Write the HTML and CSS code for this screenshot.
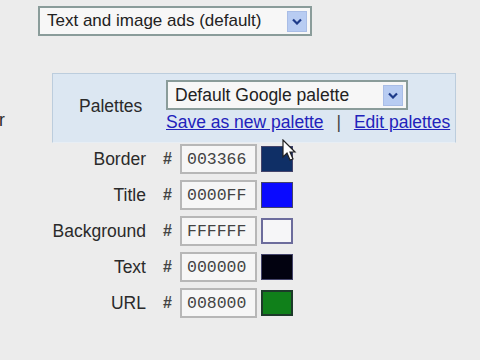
FILE: index.html
```html
<!DOCTYPE html>
<html lang="en">
<head>
  <meta charset="UTF-8" />
  <title>Ad colors</title>
  <link rel="stylesheet" href="styles.css">
</head>
<body>
  <div class="page">
    <div class="ad-type">
      <div class="select wide">
        <span class="select-text">Text and image ads (default)</span>
        <span class="drop-btn">
          <svg width="10" height="7" viewBox="0 0 10 7"><path d="M1 1.5 L5 5.5 L9 1.5" fill="none" stroke="#1d3a8a" stroke-width="2.2"/></svg>
        </span>
      </div>
    </div>

    <div class="side-label">Color</div>

    <div class="palette-box">
      <label class="palette-label">Palettes</label>
      <div class="palette-controls">
        <div class="select narrow">
          <span class="select-text">Default Google palette</span>
          <span class="drop-btn">
            <svg width="10" height="7" viewBox="0 0 10 7"><path d="M1 1.5 L5 5.5 L9 1.5" fill="none" stroke="#1d3a8a" stroke-width="2.2"/></svg>
          </span>
        </div>
        <div class="links">
          <a href="#">Save as new palette</a>
          <span class="sep">|</span>
          <a href="#">Edit palettes</a>
        </div>
      </div>
    </div>

    <div class="colors">
      <div class="color-row">
        <label>Border</label>
        <span class="hash">#</span>
        <input type="text" value="003366" />
        <span class="swatch" style="background:#0f2f66"></span>
      </div>
      <div class="color-row">
        <label>Title</label>
        <span class="hash">#</span>
        <input type="text" value="0000FF" />
        <span class="swatch" style="background:#0a0aff"></span>
      </div>
      <div class="color-row">
        <label>Background</label>
        <span class="hash">#</span>
        <input type="text" value="FFFFFF" />
        <span class="swatch light" style="background:#f6f6f8"></span>
      </div>
      <div class="color-row">
        <label>Text</label>
        <span class="hash">#</span>
        <input type="text" value="000000" />
        <span class="swatch" style="background:#020210"></span>
      </div>
      <div class="color-row">
        <label>URL</label>
        <span class="hash">#</span>
        <input type="text" value="008000" />
        <span class="swatch green" style="background:#10801a"></span>
      </div>
    </div>

    <svg class="cursor" width="16" height="24" viewBox="0 0 16 24">
      <path d="M1 1 L1 18 L5 14 L8 21 L11 20 L8 13 L13 13 Z" fill="#fff" stroke="#222" stroke-width="1.2"/>
    </svg>
  </div>
</body>
</html>
```

FILE: styles.css
```css
body {
  margin: 0;
  background: #ececec;
  font-family: 'Liberation Sans', Arial, sans-serif;
  font-size: 17.5px;
  color: #2a2a2a;
}

.page {
  position: relative;
  height: 360px;
  overflow: hidden;
}

.ad-type {
  padding: 6px 0 0 38px;
}

.select {
  display: flex;
  align-items: center;
  justify-content: space-between;
  box-sizing: border-box;
  background: #f7f7f7;
  border: 2px solid #8a9c9a;
  padding: 0 3px 0 7px;
}

.select.wide {
  width: 274px;
  height: 30px;
  font-size: 17px;
}

.select.narrow {
  width: 242px;
  height: 30px;
}

.select-text {
  color: #222;
}

.drop-btn {
  width: 18px;
  height: 19px;
  background: #b8ccf2;
  border: 1px solid #a9bde6;
  display: flex;
  align-items: center;
  justify-content: center;
}

.side-label {
  position: absolute;
  left: -37px;
  top: 110px;
}

.palette-box {
  margin: 37px 0 0 52px;
  width: 404px;
  height: 70px;
  box-sizing: border-box;
  background: #dce7f2;
  border: 1px solid #bccddd;
  border-bottom-color: #e8eef4;
  display: flex;
  align-items: flex-start;
  padding: 6px 0 0 26px;
}

.palette-label {
  margin-top: 16px;
  width: 87px;
}

.links {
  margin-top: 2px;
  white-space: nowrap;
}

.links a {
  color: #2222bb;
}

.sep {
  color: #444;
  margin: 0 8px;
}

.colors {
  display: flex;
  flex-direction: column;
  gap: 6px;
  margin-top: 1px;
}

.color-row {
  display: flex;
  align-items: center;
  height: 30px;
}

.color-row label {
  width: 146px;
  text-align: right;
}

.hash {
  width: 34px;
  box-sizing: border-box;
  padding-left: 17px;
  font-size: 16px;
  font-weight: bold;
  color: #444;
}

.color-row input {
  box-sizing: border-box;
  width: 77px;
  height: 30px;
  margin: 0;
  border: 2px solid #b7b7b7;
  background: #f6f6f6;
  font-family: 'Liberation Mono', 'Courier New', monospace;
  font-size: 16.5px;
  color: #444;
  padding: 0 0 0 5px;
}

.swatch {
  box-sizing: border-box;
  width: 32px;
  height: 26px;
  margin-left: 4px;
  border: 1px solid #44446a;
}

.swatch.light {
  border: 2px solid #6c6c9c;
}

.swatch.green {
  border: 2px solid #1d3a2a;
}

.cursor {
  position: absolute;
  left: 282px;
  top: 139px;
}
```
